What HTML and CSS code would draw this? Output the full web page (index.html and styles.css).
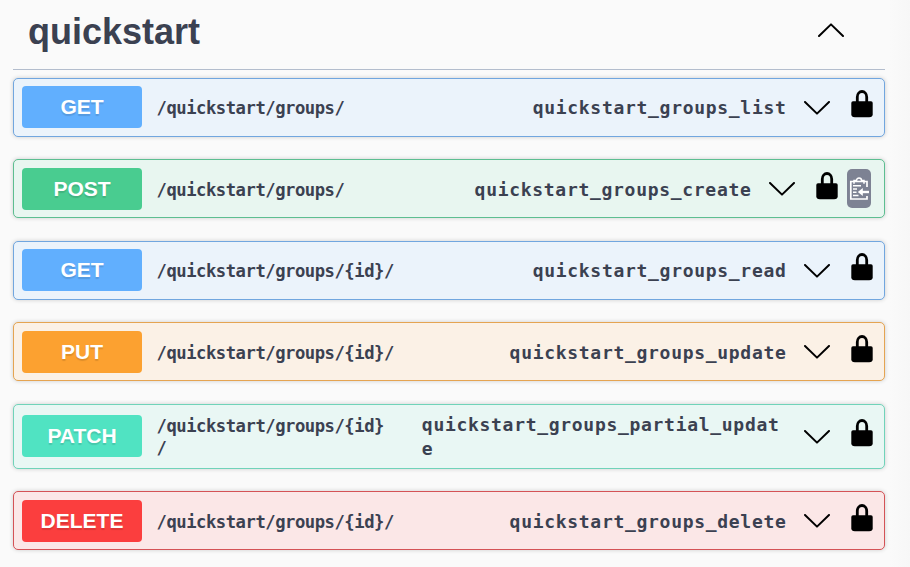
FILE: index.html
```html
<!DOCTYPE html>
<html lang="en">
<head>
<meta charset="utf-8">
<title>quickstart</title>
<link rel="stylesheet" href="styles.css">
</head>
<body>
<svg class="defs" aria-hidden="true">
  <symbol id="arrow" viewBox="0 0 26 14"><path d="M1 1 13 12.6 25 1" fill="none" stroke="#000" stroke-width="2" stroke-linecap="round" stroke-linejoin="round"/></symbol>
  <symbol id="lock" viewBox="0 0 22 28"><path d="M6.3 12V7a4.7 5.5 0 0 1 9.4 0v5" fill="none" stroke="#000" stroke-width="2.8"/><path d="M2 11.2h18q1.7 0 1.7 1.8v11.3q0 3-3.5 3H3.8q-3.5 0-3.5-3V13q0-1.8 1.7-1.8z"/></symbol>
  <symbol id="clipboard" viewBox="0 0 20 24"><g fill="none" stroke="#fff"><path d="M18 10V4.5H1.8V22H18v-3" stroke-width="1.7"/><path d="M5 6.8V3.6h2.5a2.5 2.5 0 0 1 5 0H15v3.2" stroke-width="1.5"/><path d="M4 8.7h8M4 12h4M4 15.2h3.5M4 18.5h5.5" stroke-width="1.5"/><path d="M12 15h8" stroke-width="2.4"/></g><path d="M8.8 15l5-4v8z" fill="#fff"/></symbol>
</svg>
<main class="section">
  <header class="tag"><h1>quickstart</h1><svg class="arrow up"><use href="#arrow"/></svg></header>
  <div class="operations">
    <div class="op get"><span class="method">GET</span><span class="path">/quickstart/groups/</span><span class="name">quickstart_groups_list</span><svg class="arrow"><use href="#arrow"/></svg><svg class="lock"><use href="#lock"/></svg></div>
    <div class="op post"><span class="method">POST</span><span class="path">/quickstart/groups/</span><span class="name">quickstart_groups_create</span><svg class="arrow"><use href="#arrow"/></svg><svg class="lock"><use href="#lock"/></svg><span class="copy"><svg><use href="#clipboard"/></svg></span></div>
    <div class="op get"><span class="method">GET</span><span class="path">/quickstart/groups/{id}/</span><span class="name">quickstart_groups_read</span><svg class="arrow"><use href="#arrow"/></svg><svg class="lock"><use href="#lock"/></svg></div>
    <div class="op put"><span class="method">PUT</span><span class="path">/quickstart/groups/{id}/</span><span class="name">quickstart_groups_update</span><svg class="arrow"><use href="#arrow"/></svg><svg class="lock"><use href="#lock"/></svg></div>
    <div class="op patch"><span class="method">PATCH</span><span class="path">/quickstart/groups/{id}<br>/</span><span class="name">quickstart_groups_partial_updat<br>e</span><svg class="arrow"><use href="#arrow"/></svg><svg class="lock"><use href="#lock"/></svg></div>
    <div class="op delete"><span class="method">DELETE</span><span class="path">/quickstart/groups/{id}/</span><span class="name">quickstart_groups_delete</span><svg class="arrow"><use href="#arrow"/></svg><svg class="lock"><use href="#lock"/></svg></div>
  </div>
</main>
</body>
</html>
```
FILE: styles.css
```css
* { box-sizing: border-box; }
body { margin: 0; background: linear-gradient(90deg, #fafafa 890px, #f7f7f7 910px); color: #3b4151; height: 567px; overflow: hidden; }
svg { display: block; flex: none; }
.defs { position: absolute; width: 0; height: 0; }
.section { width: 872px; margin-left: 13px; }
.tag { height: 70px; display: flex; align-items: center; justify-content: space-between; padding: 0 41px 8px 15px; border-bottom: 1px solid #b3bdcd; }
.tag h1 { margin: 2px 0 0; font: bold 36px/44px "Liberation Sans", Arial, sans-serif; }
.tag .arrow { margin-bottom: 2px; }
.operations { padding-top: 7.8px; display: flex; flex-direction: column; gap: 22.5px; }
.op { height: 59px; display: flex; align-items: center; padding: 0 11px 0 8px; border: 1px solid var(--line); border-radius: 5px; background: var(--tint); box-shadow: 0 0 4px rgba(0,0,0,.19); }
.method { flex: none; width: 120px; height: 42px; border-radius: 4px; background: var(--solid); color: #fff; text-align: center; font: bold 21px/42px "Liberation Sans", Arial, sans-serif; text-shadow: 0 2px 1px rgba(0,0,0,.12); }
.path, .name { padding-top: 2px; font-family: "DejaVu Sans Mono", monospace; font-weight: bold; white-space: nowrap; }
.path { margin-left: 14.5px; font-size: 17.2px; line-height: 22px; letter-spacing: -.46px; }
.name { margin-left: auto; font-size: 18px; line-height: 24px; letter-spacing: .7px; }
.arrow { width: 26px; height: 14px; margin-left: 17.5px; }
.arrow.up { transform: rotate(180deg); }
.op .arrow { margin-top: 1px; }
.lock { width: 22px; height: 28px; margin: 0 0 6px 21px; }
.copy { display: flex; align-items: center; justify-content: center; width: 24px; height: 39px; margin-left: 9px; background: #7d8293; border-radius: 5px; }
.copy svg { width: 20px; height: 24px; }
.get { --line: #71a6df; --tint: #ebf3fb; --solid: #61affe; }
.post { --line: #5dbe91; --tint: #e8f6f0; --solid: #49cc90; padding-right: 13px; }
.put { --line: #e5a451; --tint: #fbf1e6; --solid: #fca130; }
.patch { --line: #70d3b9; --tint: #e9f7f4; --solid: #50e3c2; height: 65px; }
.patch .name { margin-right: 7px; }
.delete { --line: #d45256; --tint: #fbe7e7; --solid: #fb3e3e; }
```
